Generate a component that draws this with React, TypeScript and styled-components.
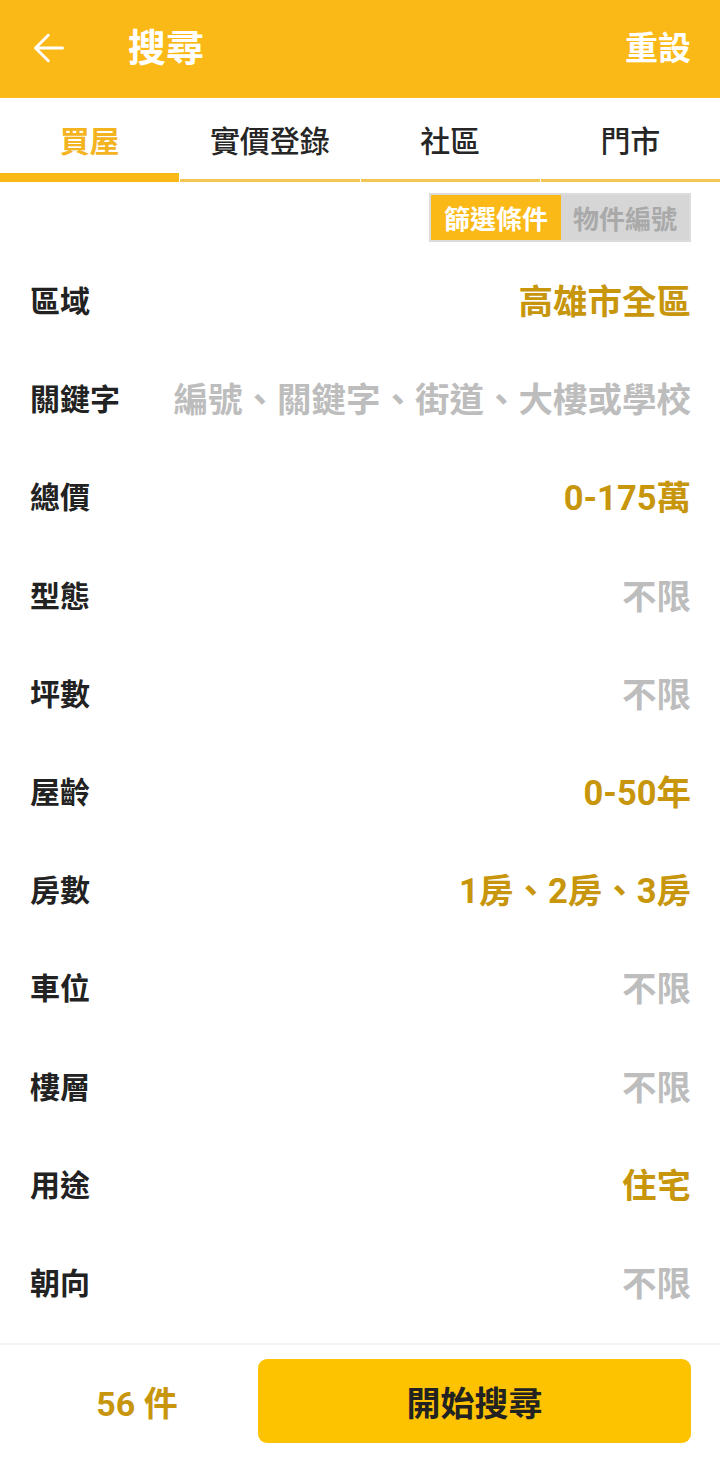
import React, { useState } from 'react'
import styled, { createGlobalStyle } from 'styled-components'

const GlobalStyle = createGlobalStyle`
  html, body {
    margin: 0;
    padding: 0;
    background: #ffffff;
  }
  body {
    font-family: Roboto, 'Noto Sans CJK TC', 'Noto Sans', sans-serif;
  }
  * {
    box-sizing: border-box;
  }
`

const YELLOW = '#fbb917'
const GOLD = '#c7960c'
const GRAY = '#bdbdbd'

type Filter = {
  label: string
  value: string
  tone: 'set' | 'empty'
}

const filters: Filter[] = [
  { label: '區域', value: '高雄市全區', tone: 'set' },
  { label: '關鍵字', value: '編號、關鍵字、街道、大樓或學校', tone: 'empty' },
  { label: '總價', value: '0-175萬', tone: 'set' },
  { label: '型態', value: '不限', tone: 'empty' },
  { label: '坪數', value: '不限', tone: 'empty' },
  { label: '屋齡', value: '0-50年', tone: 'set' },
  { label: '房數', value: '1房、2房、3房', tone: 'set' },
  { label: '車位', value: '不限', tone: 'empty' },
  { label: '樓層', value: '不限', tone: 'empty' },
  { label: '用途', value: '住宅', tone: 'set' },
  { label: '朝向', value: '不限', tone: 'empty' },
]

const tabs = ['買屋', '實價登錄', '社區', '門市']

const App: React.FC = () => {
  const [activeTab, setActiveTab] = useState(0)
  const [mode, setMode] = useState(0)

  return (
    <>
      <GlobalStyle />
      <Page>
        <TopBar>
          <BackButton aria-label="back">
            <svg width="36" height="36" viewBox="0 0 24 24" fill="none">
              <path
                d="M21 12H3.5M11.5 3.5L3 12l8.5 8.5"
                stroke="#ffffff"
                strokeWidth="2"
                strokeLinecap="round"
                strokeLinejoin="round"
              />
            </svg>
          </BackButton>
          <Title>搜尋</Title>
          <Reset>重設</Reset>
        </TopBar>

        <TabBar>
          {tabs.map((t, i) => (
            <Tab key={t} active={i === activeTab} onClick={() => setActiveTab(i)}>
              {t}
            </Tab>
          ))}
        </TabBar>

        <ModeRow>
          <Segment>
            <SegmentItem active={mode === 0} onClick={() => setMode(0)}>
              篩選條件
            </SegmentItem>
            <SegmentItem active={mode === 1} onClick={() => setMode(1)}>
              物件編號
            </SegmentItem>
          </Segment>
        </ModeRow>

        <FilterList>
          {filters.map((f) => (
            <FilterRow key={f.label}>
              <Label>{f.label}</Label>
              <Value tone={f.tone}>{f.value}</Value>
            </FilterRow>
          ))}
        </FilterList>

        <BottomBar>
          <Count>56 件</Count>
          <SearchButton>開始搜尋</SearchButton>
        </BottomBar>
      </Page>
    </>
  )
}

const Page = styled.div`
  width: 720px;
  height: 1457px;
  display: flex;
  flex-direction: column;
  background: #ffffff;
  overflow: hidden;
`

const TopBar = styled.header`
  height: 98px;
  background: ${YELLOW};
  display: flex;
  align-items: center;
  padding: 0 29px 2px 31px;
  color: #ffffff;
`

const BackButton = styled.div`
  width: 36px;
  height: 36px;
  display: flex;
  align-items: center;
  justify-content: center;
`

const Title = styled.h1`
  margin: 0 0 0 61px;
  font-size: 38px;
  font-weight: 700;
  line-height: 1;
  flex: 1;
`

const Reset = styled.span`
  font-size: 33px;
  font-weight: 700;
  line-height: 1;
`

const TabBar = styled.nav`
  height: 84px;
  display: grid;
  grid-template-columns: repeat(4, 1fr);
  column-gap: 1px;
`

const Tab = styled.div<{ active: boolean }>`
  display: flex;
  align-items: center;
  justify-content: center;
  padding-top: 6px;
  padding-bottom: ${(p) => (p.active ? '0' : '6px')};
  font-size: 30px;
  font-weight: ${(p) => (p.active ? 700 : 500)};
  color: ${(p) => (p.active ? '#f4b41f' : '#262626')};
  border-bottom: ${(p) => (p.active ? `9px solid ${YELLOW}` : '3px solid #f1c653')};
`

const ModeRow = styled.div`
  display: flex;
  justify-content: flex-end;
  padding: 11px 29px 0 0;
`

const Segment = styled.div`
  display: flex;
  height: 49px;
  border: 2px solid #dcdcdc;
  background: #d6d6d6;
`

const SegmentItem = styled.div<{ active: boolean }>`
  display: flex;
  align-items: center;
  justify-content: center;
  padding: 0 ${(p) => (p.active ? '13px' : '12px')};
  font-size: 26px;
  font-weight: 700;
  color: ${(p) => (p.active ? '#ffffff' : '#a9a9a9')};
  background: ${(p) => (p.active ? YELLOW : 'transparent')};
`

const FilterList = styled.div`
  flex: 1;
  display: flex;
  flex-direction: column;
  padding-top: 8px;
`

const FilterRow = styled.div`
  height: 98.2px;
  display: flex;
  align-items: center;
  justify-content: space-between;
  padding: 0 29px 0 30px;
`

const Label = styled.span`
  font-size: 30px;
  font-weight: 700;
  color: #222222;
  white-space: nowrap;
`

const Value = styled.span<{ tone: 'set' | 'empty' }>`
  font-size: 34.5px;
  font-weight: 700;
  color: ${(p) => (p.tone === 'set' ? GOLD : GRAY)};
  white-space: nowrap;
`

const BottomBar = styled.footer`
  height: 114px;
  flex-shrink: 0;
  border-top: 2px solid #f4f4f4;
  display: flex;
  align-items: flex-start;
  padding: 14px 29px 0 0;
`

const Count = styled.div`
  width: 258px;
  height: 84px;
  display: flex;
  align-items: center;
  justify-content: center;
  padding-left: 16px;
  font-size: 34px;
  font-weight: 700;
  color: ${GOLD};
`

const SearchButton = styled.button`
  flex: 1;
  height: 84px;
  border: none;
  border-radius: 9px;
  background: #fdc300;
  color: #222222;
  font-family: inherit;
  font-size: 34px;
  font-weight: 700;
`

export default App
